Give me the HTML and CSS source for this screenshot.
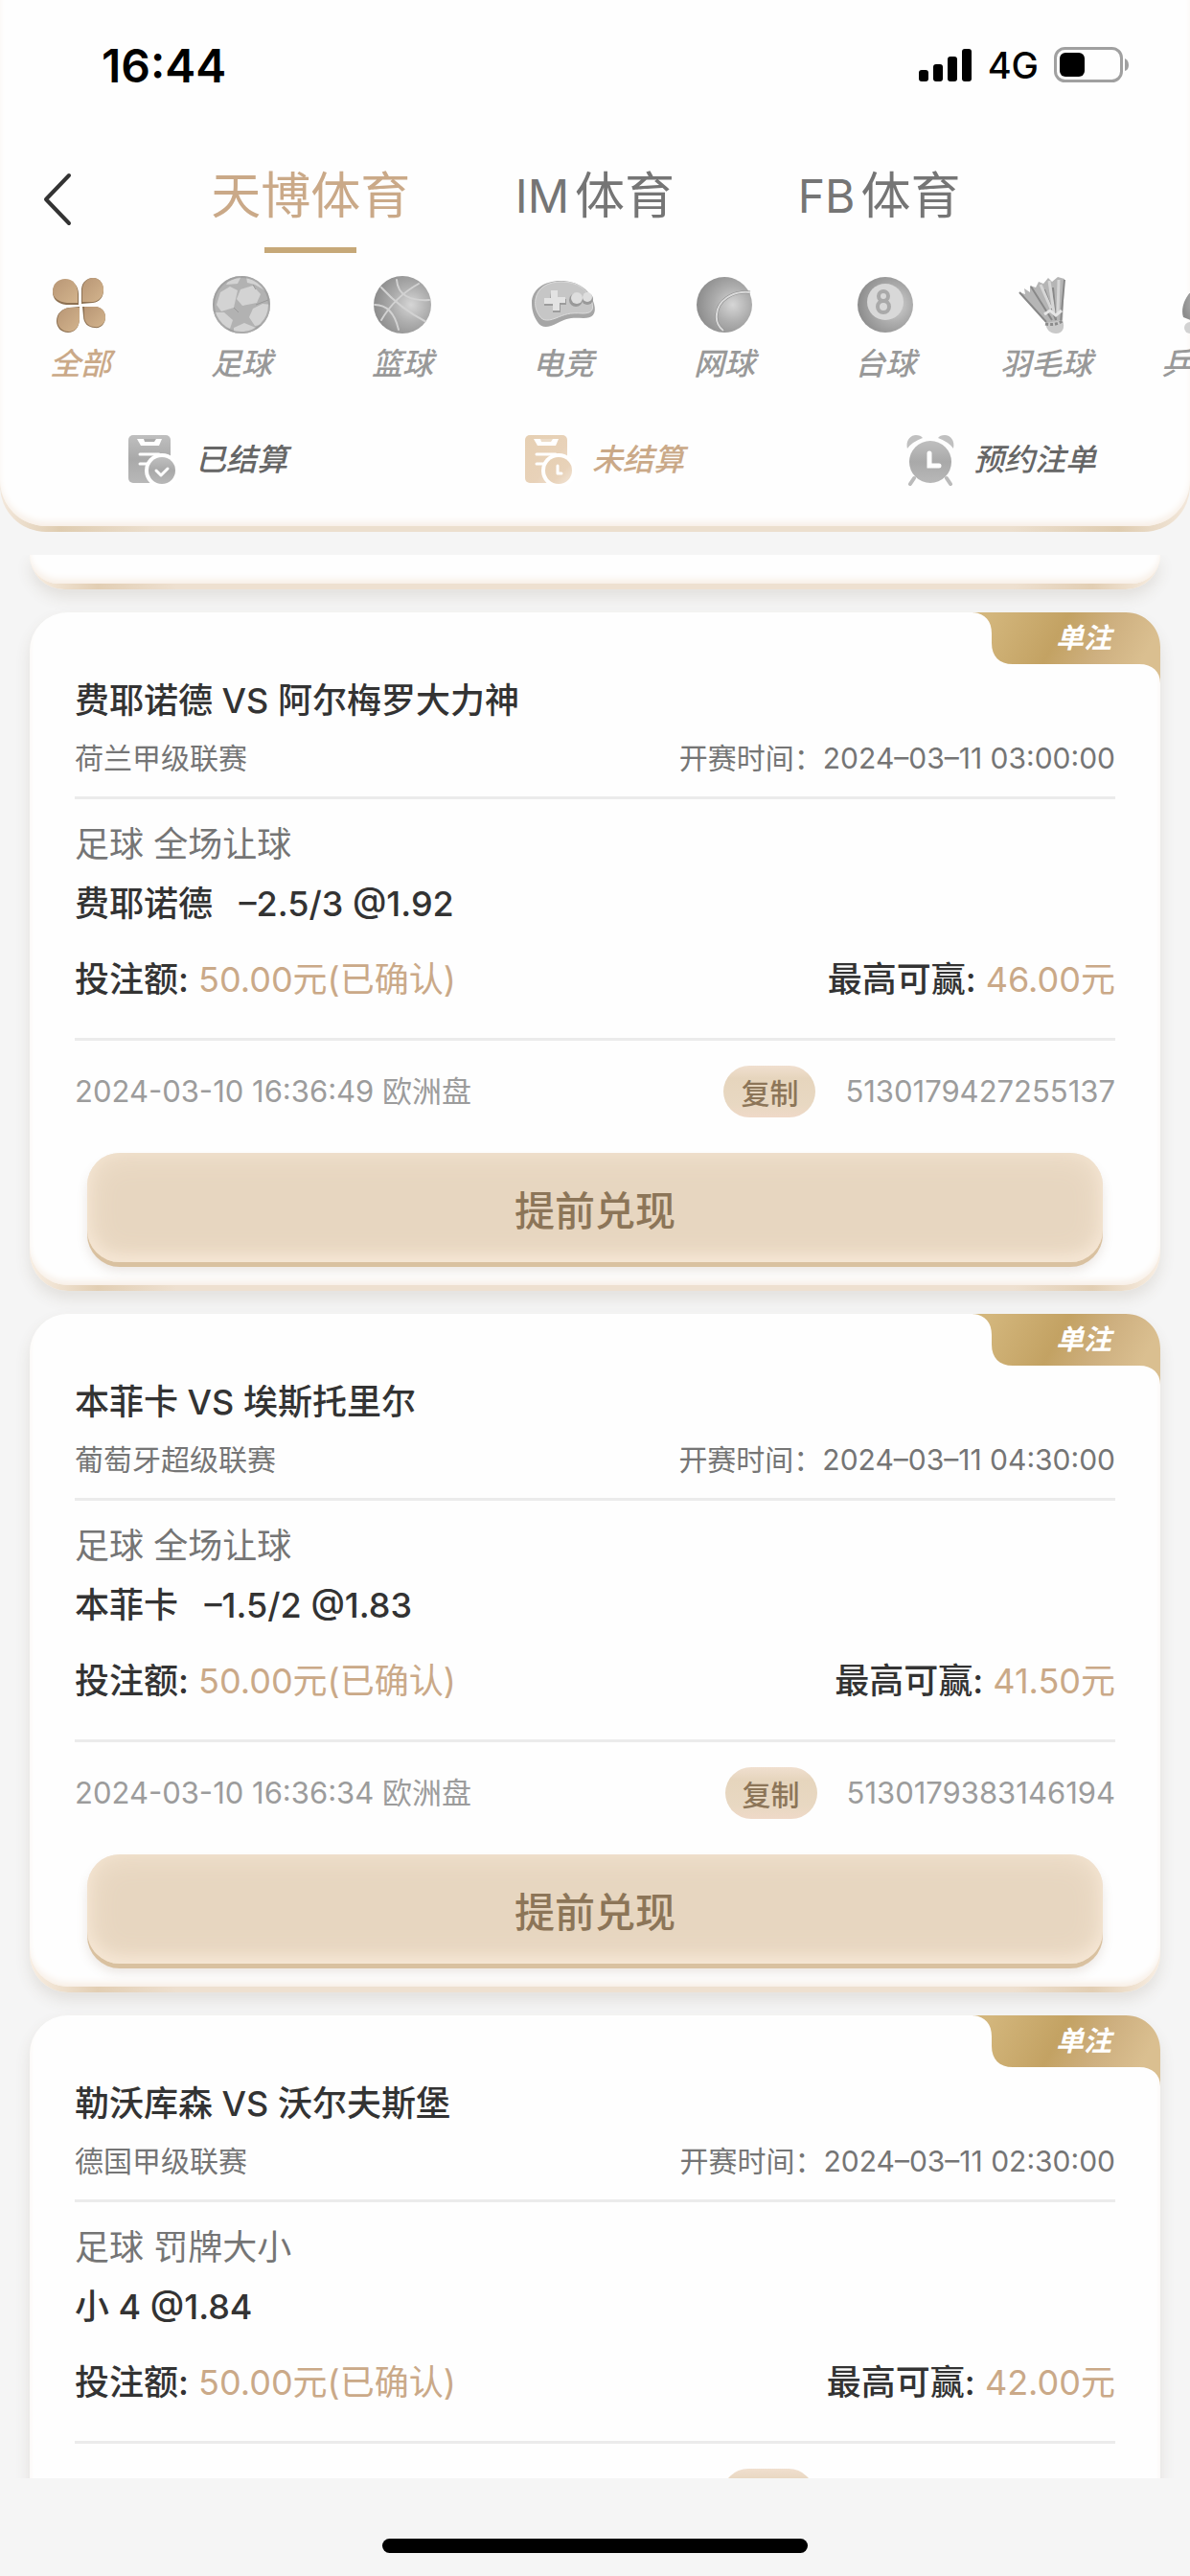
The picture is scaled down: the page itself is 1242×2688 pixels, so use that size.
FILE: index.html
```html
<!DOCTYPE html>
<html lang="zh-CN">
<head>
    <meta charset="UTF-8">
    <meta name="viewport" content="width=device-width, initial-scale=1.0">
    <title>投注记录</title>
    <link rel="stylesheet" href="styles.css">
</head>
<body>

<!-- shared gradients and the ribbon shape -->
<svg class="defs" width="0" height="0" aria-hidden="true">
    <defs>
        <linearGradient id="gold" x1="0" y1="0" x2="1" y2="1">
            <stop offset="0" stop-color="#b89675"/>
            <stop offset="1" stop-color="#d3b48d"/>
        </linearGradient>
        <radialGradient id="ball" cx="0.65" cy="0.5" r="0.65">
            <stop offset="0" stop-color="#d6d6d6"/>
            <stop offset="0.5" stop-color="#adadad"/>
            <stop offset="1" stop-color="#8c8c8c"/>
        </radialGradient>
        <linearGradient id="grey" x1="0" y1="0" x2="0" y2="1">
            <stop offset="0" stop-color="#bfbfbf"/>
            <stop offset="0.5" stop-color="#a9a9a9"/>
            <stop offset="1" stop-color="#b8b8b8"/>
        </linearGradient>
        <linearGradient id="sand" x1="0" y1="0" x2="1" y2="1">
            <stop offset="0" stop-color="#e6cfb2"/>
            <stop offset="0.6" stop-color="#e8d2b9"/>
            <stop offset="1" stop-color="#f3e6d8"/>
        </linearGradient>
        <linearGradient id="ribbon-fill" x1="0" y1="0" x2="1" y2="0.2">
            <stop offset="0.1" stop-color="#d3b67c"/>
            <stop offset="0.5" stop-color="#c3a263"/>
            <stop offset="0.75" stop-color="#ceb080"/>
            <stop offset="1" stop-color="#dabf90"/>
        </linearGradient>
        <clipPath id="ball-clip"><circle cx="30" cy="30" r="30"/></clipPath>
    </defs>
    <symbol id="ribbon" viewBox="0 0 196 74">
        <path fill="url(#ribbon-fill)" d="M0 0C13 1 20 9 20 22V32C20 46 28 54 42 54H174C188 54 196 62 196 74V36C196 16 180 0 160 0Z"/>
    </symbol>
</svg>

<header class="header">
    <div class="header-inner">
        <div class="status">
            <span class="clock">16:44</span>
            <div class="status-icons">
                <svg width="56" height="36" viewBox="0 0 56 36">
                    <rect x="0" y="23" width="10" height="12" rx="3"/>
                    <rect x="15" y="17" width="10" height="18" rx="3"/>
                    <rect x="30" y="9" width="10" height="26" rx="3"/>
                    <rect x="45" y="1" width="10" height="34" rx="3"/>
                </svg>
                <span class="network">4G</span>
                <svg width="80" height="38" viewBox="0 0 80 38">
                    <rect x="1.5" y="1.5" width="69" height="34" rx="10" fill="none" stroke="#a0a0a0" stroke-width="3"/>
                    <rect x="6" y="6" width="26" height="25" rx="6"/>
                    <path d="M74 12Q78 14 78 19T74 25Z" fill="#a0a0a0"/>
                </svg>
            </div>
        </div>

        <nav class="tabs">
            <button class="back" type="button" aria-label="返回">
                <svg width="32" height="56" viewBox="0 0 32 56"><path d="M28 3L4 28L28 53" fill="none" stroke="#333" stroke-width="4" stroke-linecap="round" stroke-linejoin="round"/></svg>
            </button>
            <a class="tab active" href="#tianbo">天博体育</a>
            <a class="tab" href="#im"><span>IM</span>体育</a>
            <a class="tab" href="#fb"><span>FB</span>体育</a>
        </nav>

        <nav class="sports">
            <a class="sport active" href="#all">
                <svg viewBox="0 0 60 60">
                    <g fill="#8d7152">
                        <path d="M28 30H15C6 29 1 24 1 17C1 9 7 4 14 4C22 4 28 10 28 19Z"/>
                        <path d="M31 29V13C32 6 37 2 43 2C50 2 54 8 54 15C54 22 50 27 43 28Z"/>
                        <path d="M29 32V46C28 54 24 59 17 59C10 59 5 54 5 47C5 39 11 34 18 33Z"/>
                        <path d="M32 32H45C52 32 56 37 56 43C56 50 51 55 45 54C38 54 33 49 33 42Z"/>
                    </g>
                    <g fill="url(#gold)">
                        <path d="M27 28H16C7 27 1 23 1 16C1 8 7 3 14 3C22 3 27 9 27 18Z"/>
                        <path d="M32 27V13C33 6 38 2 43 2C50 2 54 8 54 14C54 21 50 26 43 27Z"/>
                        <path d="M29 33V46C28 54 24 58 18 58C11 58 6 53 6 47C6 39 11 34 19 33Z"/>
                        <path d="M34 32H45C52 32 56 37 56 43C56 49 51 54 45 53C38 53 34 48 34 42Z"/>
                    </g>
                </svg>
                <span>全部</span>
            </a>
            <a class="sport" href="#football">
                <svg viewBox="0 0 60 60">
                    <circle cx="30" cy="30" r="30" fill="#b2b2b2"/>
                    <g clip-path="url(#ball-clip)" fill="#d3d3d3">
                        <path d="M8 17L18 11L26 15L22 33L9 37L4 30Z"/>
                        <path d="M29 14L42 10L50 19L46 28L31 31L25 24Z"/>
                        <path d="M52 29L62 30L58 50L44 52L38 43L42 34Z"/>
                        <path d="M-1 38L12 38L21 46L18 55L8 54Z"/>
                        <path d="M22 54L33 49L45 54L40 62H22Z"/>
                        <path d="M16 6L30 0L26 8L14 9Z"/>
                        <path d="M35 1L48 5L56 16L44 9L36 7Z"/>
                    </g>
                    <path d="M45 30L58 25M22 33L27 38M42 9L45 14" fill="none" stroke="#999" stroke-width="1"/>
                    <circle cx="30" cy="30" r="29" fill="none" stroke="#999" stroke-width="2" opacity="0.7"/>
                </svg>
                <span>足球</span>
            </a>
            <a class="sport" href="#basketball">
                <svg viewBox="0 0 60 60">
                    <circle cx="30" cy="30" r="30" fill="url(#ball)"/>
                    <g fill="none" stroke="#d2d2d2" stroke-width="2" stroke-linecap="round" clip-path="url(#ball-clip)">
                        <path d="M8 46Q22 22 47 8"/>
                        <path d="M8 12Q28 34 55 48"/>
                        <path d="M1 30Q20 30 26 56"/>
                        <path d="M24 4Q25 16 34 21T58 25"/>
                    </g>
                </svg>
                <span>篮球</span>
            </a>
            <a class="sport" href="#esports">
                <svg viewBox="0 0 60 60">
                    <path d="M-3 28C-3 14 10 5 27 5C45 5 58 14 62 29C65 40 60 44 51 44C38 43 33 44 24 49C13 55 7 54 3 48C-1 42-3 36-3 28Z" fill="#a6a6a6"/>
                    <path d="M1 24C3 12 14 6 28 6C45 6 56 14 60 28C62 36 59 39 50 39C36 38 32 40 22 44C12 48 7 46 4 40C1 35 0 30 1 24Z" fill="#c6c6c6" stroke="#dcdcdc" stroke-width="1"/>
                    <path d="M17 17H24V24H33V30H27V38H19V31H10V24H16Z" fill="#9c9c9c"/>
                    <path d="M17 15H24V22H32V28H26V36H19V29H10V23H17Z" fill="#e3e3e3"/>
                    <circle cx="43" cy="25" r="7" fill="#999"/>
                    <circle cx="55" cy="24" r="6" fill="#999"/>
                    <circle cx="44" cy="23" r="6" fill="#dedede"/>
                    <circle cx="55" cy="22" r="5" fill="#dedede"/>
                </svg>
                <span>电竞</span>
            </a>
            <a class="sport" href="#tennis">
                <svg viewBox="0 0 60 60">
                    <circle cx="30" cy="30" r="29" fill="url(#ball)"/>
                    <path d="M57 17C38 15 23 26 22 40C21 47 24 53 29 57" fill="none" stroke="#8c8c8c" stroke-width="3"/>
                    <path d="M57 17C38 15 23 26 22 40C21 47 24 53 29 57" fill="none" stroke="#dadada" stroke-width="2"/>
                </svg>
                <span>网球</span>
            </a>
            <a class="sport" href="#billiards">
                <svg viewBox="0 0 60 60">
                    <circle cx="30" cy="30" r="29" fill="url(#ball)"/>
                    <circle cx="30" cy="27" r="19" fill="#d8d8d8"/>
                    <circle cx="28" cy="21" r="5" fill="none" stroke="#a9a9a9" stroke-width="4"/>
                    <circle cx="28" cy="32" r="6" fill="none" stroke="#a9a9a9" stroke-width="4"/>
                </svg>
                <span>台球</span>
            </a>
            <a class="sport" href="#badminton">
                <svg viewBox="0 0 60 60">
                    <path d="M2 17L8 19L7 13L13 17L13 10L19 12L22 6L27 8L32 2L36 6L42 1L49 3L47 49L31 50Z" fill="#b5b5b5"/>
                    <path d="M2 17L30 48M14 11L36 46M28 14L40 46M37 12L40 46M49 4L45 48" fill="none" stroke="#888" stroke-width="2"/>
                    <path d="M24 9L35 34M33 5L38 38M43 4L42 40" fill="none" stroke="#d6d6d6" stroke-width="3"/>
                    <path d="M28 40L34 36L40 41L46 36" fill="none" stroke="#e6e6e6" stroke-width="3"/>
                    <path d="M29 49L47 46C50 54 47 60 40 60C34 60 30 56 29 49Z" fill="#c9c9c9"/>
                    <path d="M29 50Q39 52 47 47" fill="none" stroke="#8b8b8b" stroke-width="3" stroke-dasharray="3 2"/>
                </svg>
                <span>羽毛球</span>
            </a>
            <a class="sport" href="#tabletennis">
                <svg viewBox="0 0 60 60">
                    <path d="M20 10C6 20 2 34 5 43L18 48L44 36V8Z" fill="url(#ball)"/>
                    <circle cx="12" cy="54" r="6" fill="#d2d2d2"/>
                </svg>
                <span>乒乓球</span>
            </a>
        </nav>

        <nav class="filters">
            <a class="filter" href="#settled">
                <svg width="52" height="54" viewBox="0 0 52 54">
                    <rect x="0" y="1" width="44" height="50" rx="5" fill="url(#grey)"/>
                    <path d="M9 5H35L32 12H13Z" fill="#fff"/>
                    <path d="M16 5H29L27 8H17Z" fill="#aaa"/>
                    <path d="M12 21H32M12 31H22" stroke="#fff" stroke-width="3" stroke-linecap="round"/>
                    <circle cx="35" cy="38" r="18" fill="#fff"/>
                    <circle cx="35" cy="38" r="14" fill="url(#grey)"/>
                    <path d="M29 38L34 43L41 36" fill="none" stroke="#fff" stroke-width="3" stroke-linecap="round" stroke-linejoin="round"/>
                </svg>
                <span>已结算</span>
            </a>
            <a class="filter active" href="#unsettled">
                <svg width="52" height="54" viewBox="0 0 52 54">
                    <rect x="0" y="1" width="44" height="50" rx="5" fill="url(#sand)"/>
                    <path d="M9 5H35L32 12H13Z" fill="#fff"/>
                    <path d="M16 5H29L27 8H17Z" fill="#ecdcc8"/>
                    <path d="M12 21H32M12 31H22" stroke="#fff" stroke-width="3" stroke-linecap="round"/>
                    <circle cx="35" cy="38" r="18" fill="#fff"/>
                    <circle cx="35" cy="38" r="14" fill="url(#sand)"/>
                    <path d="M34 33V41H38" fill="none" stroke="#fff" stroke-width="3" stroke-linecap="round" stroke-linejoin="round"/>
                </svg>
                <span>未结算</span>
            </a>
            <a class="filter" href="#booked">
                <svg width="52" height="54" viewBox="0 0 52 54">
                    <path d="M8 46L4 52M42 46L46 52" stroke="#bbb" stroke-width="4" stroke-linecap="round"/>
                    <path d="M1 15C-1 7 4 1 10 1Q15 1 17 4Q6 8 1 15Z" fill="#c0c0c0"/>
                    <path d="M49 15C51 7 46 1 40 1Q35 1 33 4Q44 8 49 15Z" fill="#c0c0c0"/>
                    <circle cx="25" cy="29" r="22" fill="url(#grey)"/>
                    <path d="M24 20V33H34" fill="none" stroke="#fff" stroke-width="5" stroke-linecap="round"/>
                </svg>
                <span>预约注单</span>
            </a>
        </nav>
    </div>
</header>

<main class="list">
    <!-- tail of the card that is scrolled away -->
    <div class="card card-tail"><div class="card-inner"></div></div>

    <article class="card">
        <div class="card-inner">
            <div class="ribbon"><svg><use href="#ribbon"/></svg><span>单注</span></div>
            <h2 class="title">费耶诺德 VS 阿尔梅罗大力神</h2>
            <div class="league">
                <span>荷兰甲级联赛</span>
                <span>开赛时间：2024–03–11 03:00:00</span>
            </div>
            <p class="market">足球 全场让球</p>
            <p class="pick">费耶诺德 &ensp;–2.5/3 @1.92</p>
            <div class="stake">
                <p><b>投注额:</b> <span>50.00元(已确认)</span></p>
                <p><b>最高可赢:</b> <span>46.00元</span></p>
            </div>
            <div class="order">
                <span>2024-03-10 16:36:49 欧洲盘</span>
                <button class="copy" type="button">复制</button>
                <span>5130179427255137</span>
            </div>
            <button class="cashout" type="button">提前兑现</button>
        </div>
    </article>

    <article class="card">
        <div class="card-inner">
            <div class="ribbon"><svg><use href="#ribbon"/></svg><span>单注</span></div>
            <h2 class="title">本菲卡 VS 埃斯托里尔</h2>
            <div class="league">
                <span>葡萄牙超级联赛</span>
                <span>开赛时间：2024–03–11 04:30:00</span>
            </div>
            <p class="market">足球 全场让球</p>
            <p class="pick">本菲卡 &ensp;–1.5/2 @1.83</p>
            <div class="stake">
                <p><b>投注额:</b> <span>50.00元(已确认)</span></p>
                <p><b>最高可赢:</b> <span>41.50元</span></p>
            </div>
            <div class="order">
                <span>2024-03-10 16:36:34 欧洲盘</span>
                <button class="copy" type="button">复制</button>
                <span>5130179383146194</span>
            </div>
            <button class="cashout" type="button">提前兑现</button>
        </div>
    </article>

    <article class="card">
        <div class="card-inner">
            <div class="ribbon"><svg><use href="#ribbon"/></svg><span>单注</span></div>
            <h2 class="title">勒沃库森 VS 沃尔夫斯堡</h2>
            <div class="league">
                <span>德国甲级联赛</span>
                <span>开赛时间：2024–03–11 02:30:00</span>
            </div>
            <p class="market">足球 罚牌大小</p>
            <p class="pick">小 4 @1.84</p>
            <div class="stake">
                <p><b>投注额:</b> <span>50.00元(已确认)</span></p>
                <p><b>最高可赢:</b> <span>42.00元</span></p>
            </div>
            <div class="order order-cut">
                <button class="copy" type="button" aria-label="复制"></button>
            </div>
        </div>
    </article>
</main>

<footer class="home-bar"><span></span></footer>

</body>
</html>
```
FILE: styles.css
```css
* {
    box-sizing: border-box;
}
body {
    margin: 0;
    height: 100vh;
    display: flex;
    flex-direction: column;
    overflow: hidden;
    background-color: #f5f5f5;
    color: #333;
    font-family: Inter, "Noto Sans CJK SC", sans-serif;
}
h2, p {
    margin: 0;
}
a {
    color: inherit;
    text-decoration: none;
}
button {
    border: none;
    padding: 0;
    background: none;
    font-family: inherit;
    cursor: pointer;
}
svg {
    display: block;
}
.defs {
    position: absolute;
}

/* header: the padding shows the gold edge below the white panel */
.header {
    flex: none;
    margin-bottom: 24px;
    padding-bottom: 6px;
    border-radius: 0 0 48px 48px;
    background: linear-gradient(90deg, #f3e8dc, #dfccb0 5%, #ecdfce 13%, #ecdfce 85%, #dfccb0 94%, #f3e8dc);
}
.header-inner {
    overflow: hidden;
    border-radius: 0 0 48px 48px;
    background-color: #fefefe;
    box-shadow: inset 0 -6px 8px -3px #f6ebe0;
}
.status {
    display: flex;
    align-items: center;
    justify-content: space-between;
    height: 152px;
    padding: 0 62px 16px 106px;
    color: #000;
}
.clock {
    font-size: 48px;
    font-weight: 600;
}
.status-icons {
    display: flex;
    align-items: center;
    gap: 16px;
}
.network {
    font-size: 38px;
    font-weight: 500;
}

.tabs {
    display: grid;
    grid-template-columns: 176px 1fr 1fr 1fr 176px;
}
.back {
    display: flex;
    align-items: center;
    padding-left: 44px;
}
.tab {
    display: flex;
    flex-wrap: wrap;
    justify-content: center;
    color: #757575;
    font-size: 52px;
    line-height: 106px;
}
.tab span {
    margin-right: 6px;
    font-size: 48px;
}
.tab::after {
    content: "";
    flex: 0 0 100%;
    height: 6px;
}
.tab.active {
    color: #caa988;
}
.tab.active::after {
    background: linear-gradient(#c6a878, #c6a878) center / 96px 6px no-repeat;
}

.sports {
    display: flex;
    overflow: hidden;
    padding-top: 24px;
}
.sport {
    flex: 0 0 168px;
    display: flex;
    flex-direction: column;
    align-items: center;
    gap: 12px;
    color: #999;
    font-size: 32px;
    font-weight: 500;
    font-style: italic;
    line-height: 40px;
}
.sport svg {
    width: 60px;
    height: 60px;
    overflow: visible;
}
.sport.active {
    color: #caa988;
}

.filters {
    display: grid;
    grid-template-columns: 1fr 1fr 1fr;
    padding: 53px 0 42px;
}
.filter {
    display: flex;
    align-items: center;
    justify-content: center;
    gap: 18px;
    padding-left: 20px;
    color: #666;
    font-size: 32px;
    font-weight: 500;
    font-style: italic;
    line-height: 54px;
}
.filter.active {
    color: #caa988;
}

/* bet list */
.list {
    flex: 1;
    min-height: 0;
    overflow: hidden;
    display: flex;
    flex-direction: column;
    gap: 24px;
    padding: 0 31px;
}
.card {
    flex: none;
    padding-bottom: 6px;
    border-radius: 40px;
    background: linear-gradient(90deg, #f8eee3, #e2ceb3 6%, #eee0d0 13%, #eee0d0 87%, #e2ceb3 94%, #f8eee3) bottom / 100% 60px no-repeat;
    box-shadow: 0 8px 16px rgba(90, 70, 50, 0.12);
}
.card-inner {
    position: relative;
    padding: 65px 47px 19px;
    border-radius: 40px;
    background-color: #fefefe;
    box-shadow: inset 0 -6px 8px -3px #f6ebe0;
}
.card-tail, .card-tail .card-inner {
    border-radius: 0 0 40px 40px;
}
.card-tail .card-inner {
    height: 30px;
    padding: 0;
}
.ribbon {
    position: absolute;
    top: 0;
    right: 0;
    width: 196px;
    height: 74px;
}
.ribbon svg {
    width: 100%;
    height: 100%;
}
.ribbon span {
    position: absolute;
    top: 0;
    left: 87px;
    color: #fff;
    font-size: 29px;
    font-weight: 700;
    font-style: italic;
    line-height: 54px;
}
.title {
    font-size: 36px;
    font-weight: 500;
    line-height: 54px;
}
.league {
    display: flex;
    justify-content: space-between;
    padding-bottom: 7px;
    border-bottom: 3px solid #ebebeb;
    color: #757575;
    font-size: 30px;
    line-height: 66px;
}
.market {
    margin-top: 20px;
    color: #757575;
    font-size: 36px;
    line-height: 54px;
}
.pick {
    margin-top: 8px;
    font-size: 36px;
    font-weight: 500;
    line-height: 54px;
}
.stake {
    display: flex;
    justify-content: space-between;
    margin-top: 25px;
    padding-bottom: 34px;
    border-bottom: 3px solid #ebebeb;
    font-size: 36px;
    line-height: 54px;
}
.stake b {
    font-weight: 500;
}
.stake span {
    color: #caa988;
}
.order {
    display: flex;
    align-items: center;
    padding-top: 26px;
    color: #9c9c9c;
    font-size: 31px;
    line-height: 54px;
}
.copy {
    width: 96px;
    height: 54px;
    margin-left: auto;
    margin-right: 31px;
    border-radius: 27px;
    background: linear-gradient(#f0dfcf, #e6d5bd 25%, #e8d8c2 75%, #efd9c8);
    color: #8c7558;
    font-size: 30px;
    font-weight: 500;
}
.order-cut .copy {
    margin-right: 314px;
}
.cashout {
    display: block;
    width: calc(100% - 26px);
    height: 114px;
    margin: 37px 13px 5px;
    border-radius: 34px;
    background-color: #e7d6c0;
    box-shadow: inset 0 0 32px #f4e5d2, inset 0 -6px 14px #f7e8d7, 0 5px 0 #d9c1a0, 0 9px 12px rgba(120, 90, 60, 0.15);
    color: #8c7558;
    font-size: 42px;
    font-weight: 500;
}

.home-bar {
    flex: none;
    display: flex;
    justify-content: center;
    height: 102px;
    padding-top: 63px;
}
.home-bar span {
    width: 444px;
    height: 15px;
    border-radius: 8px;
    background-color: #000;
}
```
